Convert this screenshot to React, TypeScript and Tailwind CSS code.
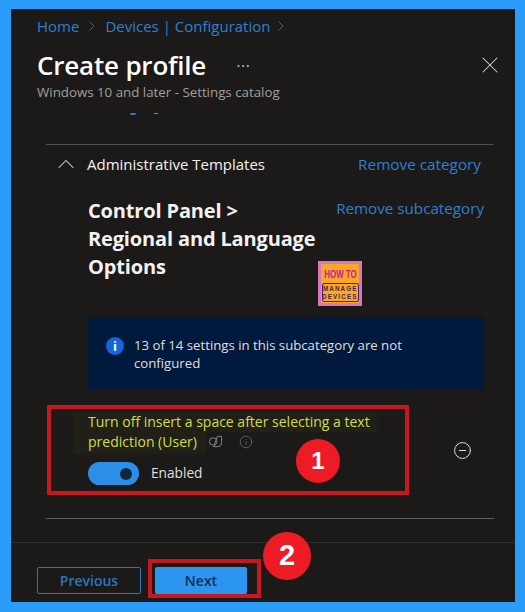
import React from 'react';
import { X, ChevronRight, ChevronUp, MoreHorizontal, CircleMinus, Info } from 'lucide-react';

const font = "font-['Open_Sans','Noto_Sans',sans-serif]";

const Logo = () => (
  <div className="w-[44px] h-[45px] bg-[#d877c0] p-[3px] shrink-0 font-['Liberation_Sans',sans-serif]">
    <div className="h-full bg-[#f9a825] flex flex-col items-center pt-[4px]">
      <span className="text-[11px] leading-[12px] font-bold text-[#c2209c] scale-x-[0.72] whitespace-nowrap">HOW TO</span>
      <div className="mt-[3px] w-[37px] h-[19px] border border-[#4a1d5c] rounded-[2px] flex flex-col items-center justify-center">
        <span className="text-[8px] leading-[8px] font-bold text-[#4a1d5c] tracking-[1.5px] scale-x-[0.78] whitespace-nowrap">MANAGE</span>
        <span className="text-[8px] leading-[8px] font-bold text-[#4a1d5c] tracking-[1.5px] scale-x-[0.78] whitespace-nowrap">DEVICES</span>
      </div>
    </div>
  </div>
);

const Badge = ({ n, className }: { n: string; className: string }) => (
  <div className={`absolute rounded-full bg-[#ed1c24] text-white font-bold flex items-center justify-center font-['Liberation_Sans',sans-serif] ${className}`}>
    {n}
  </div>
);

export default function App() {
  return (
    <div className={`w-[525px] h-[612px] bg-[#2a9dfb] pt-[9px] pl-[11px] overflow-hidden ${font}`}>
      <div className="relative w-[504px] h-[593px] bg-[#1b1a19] flex flex-col">
        {/* Header */}
        <div className="px-[26px] pt-[7px]">
          <div className="flex items-center h-[20px] text-[15px] text-[#2f7fd0]">
            <span>Home</span>
            <ChevronRight className="w-[16px] h-[16px] mx-[5px] text-[#8a8886]" strokeWidth={1} />
            <span>Devices | Configuration</span>
            <ChevronRight className="w-[16px] h-[16px] mx-[3px] text-[#8a8886]" strokeWidth={1} />
          </div>
          <div className="flex items-center h-[36px] mt-[11px]">
            <h1 className="text-[26px] leading-[36px] font-semibold text-white tracking-[-0.2px]">Create profile</h1>
            <MoreHorizontal className="w-[16px] h-[16px] ml-[29px] mt-[1px] text-[#c8c6c4]" strokeWidth={1.25} />
            <X className="w-[28px] h-[28px] ml-auto mr-[-15px] text-[#d6d6d6]" strokeWidth={0.9} />
          </div>
          <p className="text-[13.3px] leading-[18px] text-[#a19f9d]">Windows 10 and later - Settings catalog</p>
        </div>

        {/* Scrolled content */}
        <div className="flex-1 overflow-hidden pl-[35px] pr-[21px]">
          {/* bottom edge of the line scrolled out of view */}
          <div className="h-[43px] pt-[12px] pl-[84px] flex items-start gap-[18px]">
            <div className="w-[6px] h-[2px] rounded-b-full bg-[#2f7fd0]" />
            <div className="w-[4px] h-[1px] bg-[#8a8886]" />
          </div>
          <div className="border-t border-[#514f4d]">
            <div className="flex items-center h-[38px] pl-[6px] pr-[13px]">
              <ChevronUp className="w-[28px] h-[28px] text-[#d6d6d6]" strokeWidth={0.9} />
              <span className="ml-[7px] text-[15px] text-[#f3f2f1]">Administrative Templates</span>
              <span className="ml-auto text-[15.3px] text-[#2f7fd0]">Remove category</span>
            </div>
            <div className="pl-[42px] pr-[10px]">
              <div className="flex justify-between items-start mt-[14px]">
                <h2 className="text-[20px] leading-[28px] font-bold text-[#f3f2f1] tracking-[-0.15px] whitespace-nowrap">
                  <span className="block">Control Panel &gt;</span>
                  <span className="block">Regional and Language</span>
                  <span className="block">Options</span>
                </h2>
                <span className="text-[15.2px] leading-[20px] text-[#2f7fd0] mt-[1px] whitespace-nowrap">Remove subcategory</span>
              </div>
              <div className="flex pl-[230px] mt-[-20px]">
                <Logo />
              </div>
              <div className="mt-[11px] h-[73px] bg-[#001a3d] flex items-start pl-[18px] pt-[19px] pr-[40px]">
                <div className="w-[18px] h-[18px] rounded-full bg-[#1467d8] flex items-center justify-center shrink-0 mt-[1px]">
                  <span className="text-white text-[13px] leading-none font-bold">i</span>
                </div>
                <p className="ml-[10px] text-[13.2px] leading-[18px] text-[#e1dfdd]">
                  13 of 14 settings in this subcategory are not configured
                </p>
              </div>
            </div>

            {/* Setting row */}
            <div className="flex items-center mt-[22px] pl-[42px] pr-[22px]">
              <div className="flex-1">
                <p className="text-[14px] leading-[20px] text-[#d3dc48] w-[300px]">
                  Turn off insert a space after selecting a text prediction (User)
                  <span className="inline-flex items-center align-[-2px] ml-[11px] gap-[16px]">
                    <svg viewBox="0 0 16 16" className="w-[15px] h-[15px] text-[#8a8886]" fill="none" stroke="currentColor" strokeWidth="1">
                      <rect x="1.5" y="4" width="8" height="8" rx="4" />
                      <path d="M6 13.5h4.5a4 4 0 0 0 4-4V2.5H10L6 13.5z" />
                    </svg>
                    <Info className="w-[14px] h-[14px] text-[#8a8886]" strokeWidth={1} />
                  </span>
                </p>
                <div className="flex items-center mt-[10px]">
                  <div className="w-[51px] h-[23px] rounded-full bg-[#2b8fe8] flex items-center justify-end pr-[7px]">
                    <div className="w-[12px] h-[12px] rounded-full bg-[#14253a]" />
                  </div>
                  <span className="ml-[12px] text-[13.7px] text-[#e1dfdd]">Enabled</span>
                </div>
              </div>
              <CircleMinus className="w-[19px] h-[19px] mt-[3px] text-[#e1dfdd]" strokeWidth={1.25} />
            </div>
            <div className="mt-[33px] border-t border-[#605e5c]" />
          </div>
        </div>

        {/* Footer */}
        <div className="h-[60px] border-t border-[#2f2e2d] flex items-start pl-[26px] pt-[24px] gap-[14px]">
          <div className="w-[104px] h-[27px] rounded-[2px] border border-[#2b78b8] text-[14px] font-semibold text-[#2b76c2] flex items-center justify-center">
            Previous
          </div>
          <div className="w-[92px] h-[27px] rounded-[2px] bg-[#2b95f0] text-[14px] font-semibold text-[#11304f] flex items-center justify-center">
            Next
          </div>
        </div>

        {/* Annotations */}
        <div className="absolute left-[62px] top-[403px] w-[304px] h-[20px] bg-[#dfe000]/[0.03]" />
        <div className="absolute left-[62px] top-[423px] w-[133px] h-[22px] bg-[#dfe000]/[0.03]" />
        <div className="absolute left-[36px] top-[396px] w-[362px] h-[90px] border-[4px] border-[#c8171f]" />
        <div className="absolute left-[137px] top-[550px] w-[113px] h-[39px] border-[4px] border-[#c8171f]" />
        <Badge n="1" className="left-[285px] top-[430px] w-[44px] h-[44px] text-[24px]" />
        <Badge n="2" className="left-[252px] top-[523px] w-[48px] h-[48px] text-[29px]" />
      </div>
    </div>
  );
}
